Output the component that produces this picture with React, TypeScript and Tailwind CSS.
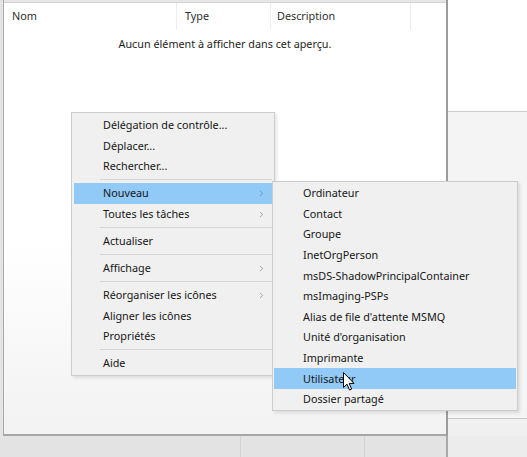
import { ChevronRight } from "lucide-react"

type Item = { label: string; sub?: boolean; active?: boolean } | "sep"

const mainItems: Item[] = [
  { label: "Délégation de contrôle..." },
  { label: "Déplacer..." },
  { label: "Rechercher..." },
  "sep",
  { label: "Nouveau", sub: true, active: true },
  { label: "Toutes les tâches", sub: true },
  "sep",
  { label: "Actualiser" },
  "sep",
  { label: "Affichage", sub: true },
  "sep",
  { label: "Réorganiser les icônes", sub: true },
  { label: "Aligner les icônes" },
  { label: "Propriétés" },
  "sep",
  { label: "Aide" },
]

const newItems = [
  "Ordinateur",
  "Contact",
  "Groupe",
  "InetOrgPerson",
  "msDS-ShadowPrincipalContainer",
  "msImaging-PSPs",
  "Alias de file d'attente MSMQ",
  "Unité d'organisation",
  "Imprimante",
  "Utilisateur",
  "Dossier partagé",
]

function MenuRow({ label, sub, active }: { label: string; sub?: boolean; active?: boolean }) {
  return (
    <div
      className={`h-[20.6px] flex items-center justify-between pl-[29px] pr-[6px] ${
        active ? "bg-[#91c9f7]" : ""
      }`}
    >
      <span>{label}</span>
      {sub && <ChevronRight size={9} strokeWidth={1.5} className="text-[#666]" />}
    </div>
  )
}

// windows style pointer
function Cursor() {
  return (
    <svg width="12" height="19" viewBox="0 0 12 19" className="absolute left-[343px] top-[372px]">
      <path d="M0.5 0.5 L0.5 15.5 L4 12.2 L6.5 18 L8.6 17.1 L6.2 11.4 L11 11.4 Z" fill="#fff" stroke="#000" strokeWidth="1" />
    </svg>
  )
}

export default function App() {
  return (
    <div className="relative w-[527px] h-[457px] overflow-hidden bg-[#ececec] text-[10.8px] text-[#161616] font-['Noto_Sans','Liberation_Sans',sans-serif]">
      <div className="flex flex-col h-full">
        <div className="flex h-[436px]">
          {/* left strip */}
          <div className="w-[3px] bg-[#e4e4e4]" />

          {/* list view */}
          <div className="w-[445px] flex flex-col border-l border-l-[#a9a9a9] border-r-2 border-r-[#9b9b9b] border-b-2 border-b-[#a6a6a6] bg-white">
            <div className="h-[3px] bg-[#e6e6e6] border-b border-[#d2d2d2]" />
            <div className="h-[27px] flex items-center text-[#2e2e2e]">
              <div className="w-[173px] pl-[8px] h-full flex items-center border-r border-[#ededed]">Nom</div>
              <div className="w-[94px] pl-[8px] h-full flex items-center border-r border-[#ededed]">Type</div>
              <div className="w-[140px] pl-[6px] h-full flex items-center border-r border-[#ededed]">Description</div>
            </div>
            <div className="text-center pt-[6px] text-[#1e1e1e]">Aucun élément à afficher dans cet aperçu.</div>
            <div className="flex-1 bg-gradient-to-b from-white via-white to-[#f2f2f2]" />
          </div>

          {/* right pane */}
          <div className="flex-1 flex flex-col">
            <div className="h-[112px] bg-white border-b border-[#cdcdcd]" />
            <div className="flex-1 bg-[#f4f4f4] border-b border-[#c9c9c9]" />
            <div className="h-[17px] bg-[#f0f0f0]" />
          </div>
        </div>

        {/* status bar */}
        <div className="flex-1 flex bg-[#e3e3e3]">
          <div className="w-[241px] border-r border-[#d3d3d3]" />
          <div className="w-[124px] border-r border-[#d3d3d3]" />
          <div className="w-[83px] border-r-2 border-[#a9a9a9]" />
          <div className="flex-1 bg-[#ececec]" />
        </div>
      </div>

      {/* context menu */}
      <div className="absolute left-[71px] top-[112px] w-[204px] h-[264px] bg-[#f0f0f0] border border-[#cccccc] p-[2px] shadow-[2px_2px_3px_rgba(0,0,0,0.1)]">
        {mainItems.map((it, i) =>
          it === "sep" ? (
            <div key={i} className="h-[6.4px] flex items-center pl-[26px]">
              <div className="h-px w-full bg-[#d5d5d5]" />
            </div>
          ) : (
            <MenuRow key={i} {...it} />
          )
        )}
      </div>

      {/* submenu */}
      <div className="absolute left-[272px] top-[181px] w-[246px] h-[230px] bg-[#f0f0f0] border border-[#cccccc] p-[1px] shadow-[2px_2px_3px_rgba(0,0,0,0.1)]">
        {newItems.map((l) => (
          <MenuRow key={l} label={l} active={l === "Utilisateur"} />
        ))}
      </div>

      <Cursor />
    </div>
  )
}
